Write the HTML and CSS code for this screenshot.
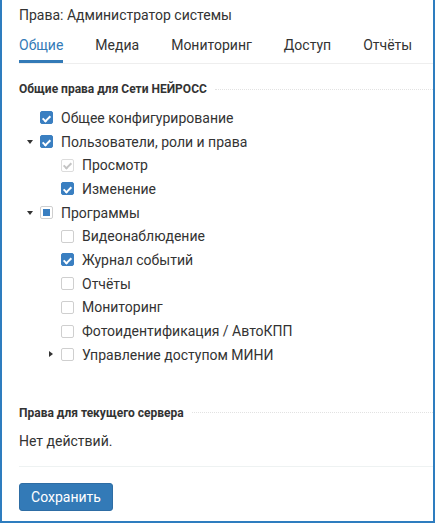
FILE: index.html
```html
<!DOCTYPE html>
<html lang="ru">
<head>
<meta charset="utf-8">
<link rel="stylesheet" href="styles.css">
</head>
<body>
<div class="window">
  <div class="title">Права: Администратор системы</div>
  <div class="tabs">
    <span class="tab active">Общие</span>
    <span class="tab">Медиа</span>
    <span class="tab">Мониторинг</span>
    <span class="tab">Доступ</span>
    <span class="tab">Отчёты</span>
  </div>

  <div class="section-head">Общие права для Сети НЕЙРОСС</div>
  <ul class="tree">
    <li class="row"><span class="toggle"></span><span class="cb checked"></span><span class="label">Общее конфигурирование</span></li>
    <li class="row"><span class="toggle down"></span><span class="cb checked"></span><span class="label">Пользователи, роли и права</span></li>
    <li class="row lvl2"><span class="toggle"></span><span class="cb disabled"></span><span class="label">Просмотр</span></li>
    <li class="row lvl2"><span class="toggle"></span><span class="cb checked"></span><span class="label">Изменение</span></li>
    <li class="row"><span class="toggle down"></span><span class="cb partial"></span><span class="label">Программы</span></li>
    <li class="row lvl2"><span class="toggle"></span><span class="cb"></span><span class="label">Видеонаблюдение</span></li>
    <li class="row lvl2"><span class="toggle"></span><span class="cb checked"></span><span class="label">Журнал событий</span></li>
    <li class="row lvl2"><span class="toggle"></span><span class="cb"></span><span class="label">Отчёты</span></li>
    <li class="row lvl2"><span class="toggle"></span><span class="cb"></span><span class="label">Мониторинг</span></li>
    <li class="row lvl2"><span class="toggle"></span><span class="cb"></span><span class="label">Фотоидентификация / АвтоКПП</span></li>
    <li class="row lvl2"><span class="toggle right"></span><span class="cb"></span><span class="label">Управление доступом МИНИ</span></li>
  </ul>

  <div class="section-head second">Права для текущего сервера</div>
  <div class="empty">Нет действий.</div>
  <div class="footer">
    <button class="btn">Сохранить</button>
  </div>
</div>
</body>
</html>
```

FILE: styles.css
```css
html, body {
  margin: 0;
  padding: 0;
  background: #fff;
}
body {
  font-family: Roboto, "Liberation Sans", sans-serif;
  font-size: 14px;
  color: #333;
}
.window {
  width: 435px;
  height: 523px;
  box-sizing: border-box;
  border: 2px solid #2e7dbf;
  border-top: none;
  padding: 5px 0 0 17px;
}
.title {
  line-height: 20px;
  height: 20px;
}
.tabs {
  display: flex;
  margin-top: 10px;
  border-bottom: 1px solid #eeeeee;
  height: 28px;
}
.tab {
  line-height: 20px;
  padding-bottom: 5px;
  margin-right: 32px;
}
.tab.active {
  color: #337ab7;
  border-bottom: 3px solid #337ab7;
}
.section-head {
  display: flex;
  align-items: center;
  font-size: 12px;
  font-weight: bold;
  line-height: 16px;
  margin-top: 17px;
}
.section-head::after {
  content: "";
  flex: 1;
  border-top: 1px dotted #e2e2e2;
  margin-left: 8px;
}
.tree {
  list-style: none;
  margin: 9px 0 0 0;
  padding: 0;
}
.row {
  display: flex;
  align-items: center;
  height: 23.7px;
}
.row.lvl2 {
  padding-left: 21px;
}
.toggle {
  width: 21px;
  height: 13px;
  flex: none;
  position: relative;
}
.toggle.down::before {
  content: "";
  position: absolute;
  left: 8px;
  top: 5px;
  border-left: 3.5px solid transparent;
  border-right: 3.5px solid transparent;
  border-top: 4px solid #333;
}
.toggle.right::before {
  content: "";
  position: absolute;
  left: 9px;
  top: 3px;
  border-top: 3.5px solid transparent;
  border-bottom: 3.5px solid transparent;
  border-left: 4px solid #333;
}
.cb {
  width: 13px;
  height: 13px;
  box-sizing: border-box;
  border: 1px solid #cfcfcf;
  border-radius: 2px;
  background: #fff;
  flex: none;
  position: relative;
}
.cb.checked {
  background: #3a7fc1;
  border-color: #3a7fc1;
}
.cb.checked::after,
.cb.disabled::after {
  content: "";
  position: absolute;
  left: 3px;
  top: 1.5px;
  width: 3px;
  height: 6px;
  border-right: 2px solid #fff;
  border-bottom: 2px solid #fff;
  transform: rotate(45deg);
}
.cb.disabled {
  border-color: #dcdcdc;
}
.cb.disabled::after {
  border-color: #c4c4c4;
}
.cb.partial::after {
  content: "";
  position: absolute;
  left: 2px;
  top: 2px;
  width: 7px;
  height: 7px;
  background: #3a7fc1;
}
.label {
  margin-left: 8px;
  line-height: 20px;
  white-space: nowrap;
}
.section-head.second {
  margin-top: 38px;
}
.empty {
  line-height: 20px;
  margin-top: 10px;
}
.footer {
  margin-top: 15px;
  border-top: 1px solid #eef2f2;
  padding-top: 16px;
}
.btn {
  font-family: Roboto, "Liberation Sans", sans-serif;
  font-size: 14px;
  color: #fff;
  background: #337ab7;
  border: 1px solid #2e6da4;
  border-radius: 3px;
  height: 28px;
  width: 94px;
  padding: 0;
  line-height: 26px;
}
```
